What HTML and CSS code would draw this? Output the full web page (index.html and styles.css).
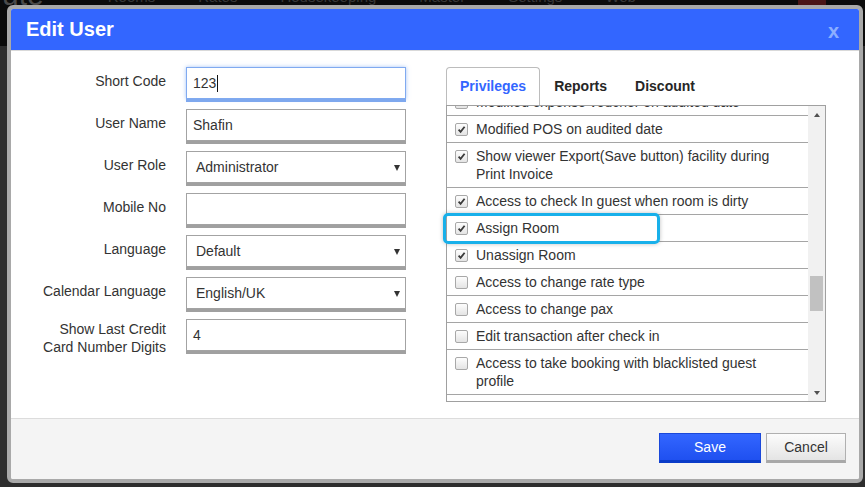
FILE: index.html
```html
<!DOCTYPE html>
<html lang="en">
<head>
<meta charset="utf-8">
<title>Edit User</title>
<link rel="stylesheet" href="styles.css">
</head>
<body>
<div class="app">
  <header class="topnav">
    <span class="logo">ute</span>
    <nav class="nav">
      <span>Rooms</span><span>Rates</span><span>Housekeeping</span><span>Master</span><span>Settings</span><span>Web</span>
    </nav>
    <span class="alert-btn"></span>
  </header>
  <main class="app-content"></main>
</div>

<div class="modal">
  <div class="modal-header">
    <span class="modal-title">Edit User</span>
    <span class="close">x</span>
  </div>
  <div class="modal-body">
    <div class="form">
      <label class="label">Short Code</label>
      <div class="field focus">123<span class="caret"></span></div>
      <label class="label">User Name</label>
      <div class="field">Shafin</div>
      <label class="label">User Role</label>
      <div class="field select"><span>Administrator</span><span class="arrow"></span></div>
      <label class="label">Mobile No</label>
      <div class="field"></div>
      <label class="label">Language</label>
      <div class="field select"><span>Default</span><span class="arrow"></span></div>
      <label class="label">Calendar Language</label>
      <div class="field select"><span>English/UK</span><span class="arrow"></span></div>
      <label class="label two-line">Show Last Credit<br>Card Number Digits</label>
      <div class="field">4</div>
    </div>

    <div class="panel">
      <div class="tabs">
        <span class="tab active">Privileges</span>
        <span class="tab">Reports</span>
        <span class="tab">Discount</span>
      </div>
      <div class="list">
        <div class="list-items">
          <div class="list-inner">
            <div class="row"><span class="cb"></span><span class="txt">Modified expense voucher on audited date</span></div>
            <div class="row"><span class="cb checked"><svg viewBox="0 0 11 11"><path d="M2.6 5.6 L4.6 7.8 L8.6 2.8"/></svg></span><span class="txt">Modified POS on audited date</span></div>
            <div class="row"><span class="cb checked"><svg viewBox="0 0 11 11"><path d="M2.6 5.6 L4.6 7.8 L8.6 2.8"/></svg></span><span class="txt">Show viewer Export(Save button) facility during Print Invoice</span></div>
            <div class="row"><span class="cb checked"><svg viewBox="0 0 11 11"><path d="M2.6 5.6 L4.6 7.8 L8.6 2.8"/></svg></span><span class="txt">Access to check In guest when room is dirty</span></div>
            <div class="row"><span class="cb checked"><svg viewBox="0 0 11 11"><path d="M2.6 5.6 L4.6 7.8 L8.6 2.8"/></svg></span><span class="txt">Assign Room</span></div>
            <div class="row"><span class="cb checked"><svg viewBox="0 0 11 11"><path d="M2.6 5.6 L4.6 7.8 L8.6 2.8"/></svg></span><span class="txt">Unassign Room</span></div>
            <div class="row"><span class="cb"></span><span class="txt">Access to change rate type</span></div>
            <div class="row"><span class="cb"></span><span class="txt">Access to change pax</span></div>
            <div class="row"><span class="cb"></span><span class="txt">Edit transaction after check in</span></div>
            <div class="row"><span class="cb"></span><span class="txt">Access to take booking with blacklisted guest profile</span></div>
            <div class="row"><span class="cb"></span><span class="txt">Access to cancel booking</span></div>
          </div>
        </div>
        <div class="scrollbar">
          <span class="sb-btn"><span class="tri up"></span></span>
          <span class="sb-track"><span class="sb-thumb"></span></span>
          <span class="sb-btn"><span class="tri down"></span></span>
        </div>
      </div>
      <div class="highlight"></div>
    </div>
  </div>
  <div class="modal-footer">
    <button class="btn btn-save">Save</button>
    <button class="btn btn-cancel">Cancel</button>
  </div>
</div>
</body>
</html>
```
FILE: styles.css
```css
* { box-sizing: border-box; }
html, body { margin: 0; padding: 0; }
body {
  width: 865px;
  height: 487px;
  overflow: hidden;
  position: relative;
  background: #2d2d2d;
  font-family: "Liberation Sans", Arial, sans-serif;
}

/* background application (dimmed) */
.app { display: flex; flex-direction: column; height: 100%; }
.topnav {
  height: 46px;
  background: #0b0b0b;
  display: flex;
  align-items: flex-start;
  overflow: hidden;
}
.logo {
  font-size: 30px;
  line-height: 30px;
  color: #4a4a4a;
  margin: -20px 0 0 2px;
}
.nav {
  display: flex;
  gap: 43px;
  margin: -12px 0 0 64px;
  font-size: 15px;
  line-height: 18px;
  color: #383838;
}
.alert-btn {
  width: 28px;
  height: 10px;
  margin: -2px 0 0 162px;
  background: #4a1616;
  border-radius: 3px;
}
.app-content { flex: 1; background: #2d2d2d; }

/* modal */
.modal {
  position: absolute;
  left: 7px;
  top: 5px;
  width: 856px;
  height: 478px;
  border: 4px solid #a9a9a9;
  border-radius: 6px;
  background: #fff;
  display: flex;
  flex-direction: column;
  overflow: hidden;
}
.modal-header {
  height: 42px;
  flex: none;
  background: #3366ff;
  border-bottom: 1px solid #d9d9d9;
  display: flex;
  align-items: center;
  justify-content: space-between;
  padding: 0 20px 0 15px;
}
.modal-title {
  font-size: 20px;
  font-weight: bold;
  color: #fff;
}
.close {
  font-size: 20px;
  font-weight: bold;
  color: #8cafff;
  margin-top: 3px;
}

.modal-body {
  flex: 1;
  display: flex;
  padding-top: 16px;
}

/* form */
.form {
  width: 395px;
  display: grid;
  grid-template-columns: 155px 220px;
  column-gap: 20px;
  row-gap: 10px;
  align-content: start;
}
.label {
  text-align: right;
  font-size: 14px;
  line-height: 18px;
  color: #333;
  padding-top: 5px;
}
.label.two-line { padding-top: 1px; }
.field {
  height: 32px;
  border: 1px solid #a3a3a3;
  box-shadow: 0 3px 0 #a0a0a0;
  background: #fff;
  font-size: 14px;
  color: #333;
  padding: 0 6px;
  display: flex;
  align-items: center;
}
.field.focus {
  border-color: #80aaf0;
  box-shadow: 0 3px 0 #7ea8ee, 0 0 4px rgba(90, 145, 240, 0.55);
}
.caret {
  width: 1px;
  height: 17px;
  background: #111;
  margin-left: 1px;
}
.field.select {
  padding: 0 5px 0 9px;
  justify-content: space-between;
}
.arrow {
  width: 0;
  height: 0;
  border-left: 3.5px solid transparent;
  border-right: 3.5px solid transparent;
  border-top: 6px solid #333;
  margin-top: 2px;
}

/* privileges panel */
.panel {
  position: relative;
  margin-left: 40px;
  width: 380px;
}
.tabs {
  display: flex;
  height: 38px;
}
.tab {
  padding: 0 13px;
  font-size: 14px;
  font-weight: bold;
  color: #262626;
  line-height: 37px;
  border: 1px solid transparent;
  border-bottom: none;
}
.tab.active {
  color: #3366ff;
  border-color: #bcbcbc;
  border-radius: 4px 4px 0 0;
}
.list {
  height: 297px;
  border: 1px solid #a0a0a0;
  display: flex;
}
.list-items {
  flex: 1;
  overflow: hidden;
}
.list-inner { margin-top: -17px; }
.row {
  display: flex;
  align-items: flex-start;
  gap: 8px;
  padding: 4px 22px 4px 8px;
  border-bottom: 1px solid #a5a5a5;
  font-size: 14px;
  line-height: 18px;
  color: #333;
}
.cb {
  flex: none;
  width: 13px;
  height: 13px;
  margin-top: 3px;
  border: 1px solid #a8a8a8;
  border-radius: 2px;
  background: linear-gradient(#fdfdfd, #e4e4e4);
  display: flex;
}
.cb svg { width: 11px; height: 11px; }
.cb path {
  fill: none;
  stroke: #3a3a3a;
  stroke-width: 1.8;
}

.scrollbar {
  width: 17px;
  flex: none;
  background: #f1f1f1;
  display: flex;
  flex-direction: column;
}
.sb-btn {
  height: 17px;
  flex: none;
  display: flex;
  align-items: center;
  justify-content: center;
}
.tri {
  width: 0;
  height: 0;
  border-left: 3.5px solid transparent;
  border-right: 3.5px solid transparent;
}
.tri.up { border-bottom: 4px solid #505050; }
.tri.down { border-top: 4px solid #505050; }
.sb-track {
  flex: 1;
  display: flex;
  flex-direction: column;
  align-items: center;
}
.sb-thumb {
  width: 13px;
  height: 35px;
  margin-top: 153px;
  background: #c1c1c1;
}

.highlight {
  position: absolute;
  left: -3px;
  top: 146px;
  width: 217px;
  height: 31px;
  border: 3px solid #18b0ea;
  border-radius: 5px;
  box-shadow: 0 0 4px rgba(0, 0, 0, 0.25);
}

/* footer */
.modal-footer {
  height: 61px;
  flex: none;
  border-top: 1px solid #dcdcdc;
  background: #f4f4f4;
  display: flex;
  justify-content: flex-end;
  align-items: flex-start;
  gap: 5px;
  padding: 14px 13px 0 0;
}
.btn {
  height: 30px;
  font-family: "Liberation Sans", Arial, sans-serif;
  font-size: 14px;
  padding: 0;
  cursor: pointer;
}
.btn-save {
  width: 102px;
  color: #fff;
  background: linear-gradient(#3366ff, #1f50f0);
  border: 1px solid #1a48da;
  border-bottom: 3px solid #0a3bc8;
}
.btn-cancel {
  width: 80px;
  color: #333;
  background: linear-gradient(#fcfcfc, #e4e4e4);
  border: 1px solid #b0b0b0;
  border-bottom: 3px solid #a8a8a8;
}
```
